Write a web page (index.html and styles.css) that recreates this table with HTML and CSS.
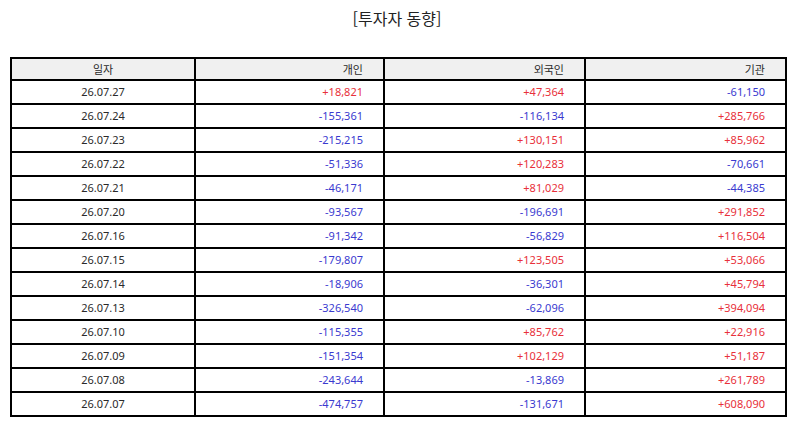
FILE: index.html
```html
<!DOCTYPE html>
<html lang="ko">
<head>
<meta charset="utf-8">
<link rel="stylesheet" href="styles.css">
</head>
<body>
<h1 class="title">[투자자 동향]</h1>
<table class="grid">
<colgroup>
<col class="c-date"><col class="c-ind"><col class="c-for"><col class="c-inst">
</colgroup>
<thead>
<tr><th class="center">일자</th><th>개인</th><th>외국인</th><th>기관</th></tr>
</thead>
<tbody>
<tr><td class="center">26.07.27</td><td class="up">+18,821</td><td class="up">+47,364</td><td class="down">-61,150</td></tr>
<tr><td class="center">26.07.24</td><td class="down">-155,361</td><td class="down">-116,134</td><td class="up">+285,766</td></tr>
<tr><td class="center">26.07.23</td><td class="down">-215,215</td><td class="up">+130,151</td><td class="up">+85,962</td></tr>
<tr><td class="center">26.07.22</td><td class="down">-51,336</td><td class="up">+120,283</td><td class="down">-70,661</td></tr>
<tr><td class="center">26.07.21</td><td class="down">-46,171</td><td class="up">+81,029</td><td class="down">-44,385</td></tr>
<tr><td class="center">26.07.20</td><td class="down">-93,567</td><td class="down">-196,691</td><td class="up">+291,852</td></tr>
<tr><td class="center">26.07.16</td><td class="down">-91,342</td><td class="down">-56,829</td><td class="up">+116,504</td></tr>
<tr><td class="center">26.07.15</td><td class="down">-179,807</td><td class="up">+123,505</td><td class="up">+53,066</td></tr>
<tr><td class="center">26.07.14</td><td class="down">-18,906</td><td class="down">-36,301</td><td class="up">+45,794</td></tr>
<tr><td class="center">26.07.13</td><td class="down">-326,540</td><td class="down">-62,096</td><td class="up">+394,094</td></tr>
<tr><td class="center">26.07.10</td><td class="down">-115,355</td><td class="up">+85,762</td><td class="up">+22,916</td></tr>
<tr><td class="center">26.07.09</td><td class="down">-151,354</td><td class="up">+102,129</td><td class="up">+51,187</td></tr>
<tr><td class="center">26.07.08</td><td class="down">-243,644</td><td class="down">-13,869</td><td class="up">+261,789</td></tr>
<tr><td class="center">26.07.07</td><td class="down">-474,757</td><td class="down">-131,671</td><td class="up">+608,090</td></tr>
</tbody>
</table>
</body>
</html>
```
FILE: styles.css
```css
html, body {
  margin: 0;
  padding: 0;
  background: #ffffff;
}
body {
  font-family: "Noto Sans", "Noto Sans CJK KR", sans-serif;
  color: #2a2a2a;
}
.title {
  margin: 6px 0 0 0;
  height: 24px;
  line-height: 24px;
  font-size: 16px;
  font-weight: normal;
  text-align: center;
  color: #222222;
  font-family: "Noto Sans CJK KR", sans-serif;
}
.grid {
  margin: 27px 0 0 10px;
  width: 775px;
  border-collapse: collapse;
  table-layout: fixed;
  font-size: 11px;
}
.c-date { width: 184px; }
.c-ind { width: 189px; }
.c-for { width: 201px; }
.c-inst { width: 201px; }
.grid th, .grid td {
  border: 2px solid #000000;
  height: 22px;
  padding: 0 20px 0 4px;
  text-align: right;
  line-height: 14px;
}
.grid th {
  height: 20px;
  background: #f0f0f0;
  font-weight: normal;
  color: #2a2a2a;
  font-family: "Noto Sans CJK KR", sans-serif;
}
.grid .center {
  text-align: center;
  padding: 0;
}
.up { color: #e8303a; }
.down { color: #3a3acf; }
```
